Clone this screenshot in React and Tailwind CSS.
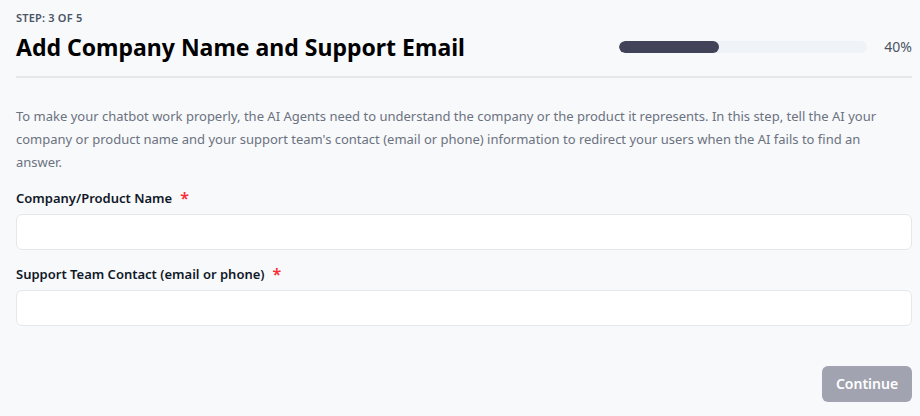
import React, { useState } from 'react';

const Field = ({ label, value, onChange }) => (
  <div>
    <label className="flex items-center text-[13px] font-semibold text-gray-900 mb-[7px] leading-[18px]">
      {label}
      <span className="ml-[8px] text-red-500 text-base leading-none">*</span>
    </label>
    <input
      type="text"
      value={value}
      onChange={(e) => onChange(e.target.value)}
      className="block w-full h-9 bg-white border border-gray-200 rounded-md px-3 text-sm focus:outline-none"
    />
  </div>
);

const App = () => {
  const [company, setCompany] = useState('');
  const [contact, setContact] = useState('');
  const progress = 40;

  return (
    <div
      className="min-h-[416px] w-[920px] bg-[#f8f9fb] pl-4 pr-2 pt-[11px] pb-[14px] flex flex-col"
      style={{ fontFamily: '"Noto Sans", "Open Sans", sans-serif' }}
    >
      {/* Entête */}
      <div className="text-[11px] font-semibold uppercase tracking-[0.2px] text-[#4b5565] leading-[14px]">
        Step: 3 of 5
      </div>
      <div className="flex items-center justify-between mt-[7px]">
        <h1 className="text-[23px] font-bold text-black leading-[30px]">
          Add Company Name and Support Email
        </h1>
        <div className="flex items-center">
          <div className="w-[248px] h-3 rounded-full bg-[#eff2f7] overflow-hidden">
            <div className="h-full rounded-full bg-[#414459]" style={{ width: `${progress}%` }} />
          </div>
          <span className="ml-[17px] text-sm text-[#4b5563]">{progress}%</span>
        </div>
      </div>
      <div className="h-[2px] bg-[#e5e7eb] mt-[14px]" />

      {/* Description */}
      <p className="mt-[27px] text-[13px] leading-[23px] text-[#6b7280] pr-6">
        To make your chatbot work properly, the AI Agents need to understand the company or the product it represents. In this step, tell the AI your company or product name and your support team's contact (email or phone) information to redirect your users when the AI fails to find an answer.
      </p>

      {/* Champs */}
      <div className="mt-[15px] flex flex-col gap-[15px]">
        <Field label="Company/Product Name" value={company} onChange={setCompany} />
        <Field label="Support Team Contact (email or phone)" value={contact} onChange={setContact} />
      </div>

      <div className="mt-auto flex justify-end">
        <button
          disabled
          className="h-9 w-[90px] rounded-md bg-[#a1a3b1] text-white text-sm font-semibold"
        >
          Continue
        </button>
      </div>
    </div>
  );
};

export default App;
